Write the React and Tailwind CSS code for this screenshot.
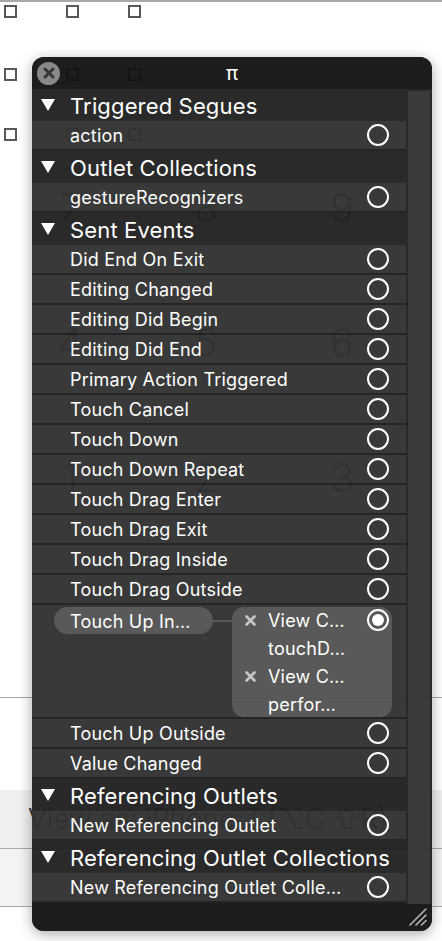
import React from "react";

const Radio = ({ filled }) => (
  <div className="w-[22px] h-[22px] rounded-full border-2 border-white flex items-center justify-center shrink-0">
    {filled && <div className="w-[12px] h-[12px] rounded-full bg-white" />}
  </div>
);

const Row = ({ label }) => (
  <div className="h-[30px] border-b-2 border-[#1c1c1c] bg-[#313131] flex items-center pl-[38px] pr-[17px]">
    <span className="flex-1 pt-[2px] text-[18px] leading-[24px] tracking-[0.2px] text-white whitespace-nowrap">{label}</span>
    <Radio />
  </div>
);

const Header = ({ label }) => (
  <div className="h-[32px] bg-[#212121] flex items-center pl-[9px]">
    <svg width="14" height="12" viewBox="0 0 14 12" className="shrink-0">
      <polygon points="0,0 14,0 7,12" fill="#ffffff" />
    </svg>
    <span className="ml-[15px] pt-[1px] text-[22px] leading-[28px] tracking-[0.15px] text-white whitespace-nowrap">{label}</span>
  </div>
);

const SmallX = () => (
  <svg width="11" height="11" viewBox="0 0 11 11" className="shrink-0">
    <path d="M1.5 1.5 L9.5 9.5 M9.5 1.5 L1.5 9.5" stroke="#c4c4c4" strokeWidth="2.6" strokeLinecap="round" />
  </svg>
);

const Txt = ({ children, className = "" }) => (
  <span className={"pt-[2px] text-[18px] leading-[24px] tracking-[0.2px] text-white whitespace-nowrap " + className}>{children}</span>
);

const ExpandedRow = () => (
  <div className="h-[114px] border-b-2 border-[#1c1c1c] bg-[#313131] flex items-start">
    <div className="ml-[22px] mt-[2px] h-[27px] w-[159px] rounded-full bg-[#525252] flex items-center pl-[16px]">
      <Txt>Touch Up In…</Txt>
    </div>
    <div className="mt-[15px] w-[19px] h-[2px] bg-[#525252]" />
    <div className="mt-[2px] w-[160px] h-[110px] rounded-[12px] bg-[#525252] flex flex-col">
      <div className="h-[27px] flex items-center pl-[13px] pr-[3px]">
        <SmallX />
        <Txt className="ml-[12px] flex-1">View C…</Txt>
        <Radio filled />
      </div>
      <div className="h-[29px] flex items-center pl-[36px]">
        <Txt>touchD…</Txt>
      </div>
      <div className="h-[29px] flex items-center pl-[13px]">
        <SmallX />
        <Txt className="ml-[12px]">View C…</Txt>
      </div>
      <div className="h-[27px] flex items-center pl-[36px]">
        <Txt>perfor…</Txt>
      </div>
    </div>
  </div>
);

const sentEvents = [
  "Did End On Exit",
  "Editing Changed",
  "Editing Did Begin",
  "Editing Did End",
  "Primary Action Triggered",
  "Touch Cancel",
  "Touch Down",
  "Touch Down Repeat",
  "Touch Drag Enter",
  "Touch Drag Exit",
  "Touch Drag Inside",
  "Touch Drag Outside",
];

const Box = () => <div className="w-[13px] h-[13px] border-2 border-[#585858] bg-white" />;

export default function App() {
  return (
    <div className="relative w-[442px] h-[941px] bg-white overflow-hidden" style={{ fontFamily: "Inter, 'Noto Sans', sans-serif" }}>
      {/* canvas behind */}
      <div className="flex flex-col">
        <div className="h-[2px] bg-[#a8a8a8]" />
        <div className="mt-[3px] flex gap-[49px] pl-[4px]"><Box /><Box /><Box /></div>
        <div className="mt-[50px] flex gap-[49px] pl-[4px]"><Box /><Box /><Box /></div>
        <div className="mt-[47px] flex gap-[49px] pl-[4px]"><Box /><Box /><Box /></div>
        <div className="mt-[47px] pl-[50px] grid grid-cols-[40px_40px_40px] gap-x-[96px] gap-y-[95px] text-[40px] leading-[40px] font-light text-[#4a5566] text-center">
          <span>7</span><span>8</span><span>9</span>
          <span>4</span><span>5</span><span>6</span>
          <span>1</span><span>2</span><span>3</span>
        </div>
        <div className="mt-[199px] h-[1px] bg-[#a8a8a8]" />
        <div className="mt-[92px] h-[58px] bg-[#efefef] flex items-center pl-[28px]">
          <span className="text-[28px] font-light text-[#333] whitespace-nowrap">View as: iPhone 7 (⌥C ⇧R)</span>
        </div>
        <div className="h-[1px] bg-[#a8a8a8]" />
        <div className="h-[57px] bg-[#f3f3f3]" />
        <div className="h-[1px] bg-[#a8a8a8]" />
      </div>

      {/* floating connections panel */}
      <div className="absolute left-[32px] top-[57px] w-[400px] h-[874px] rounded-[12px] overflow-hidden opacity-[0.955] shadow-[0_3px_14px_rgba(0,0,0,0.35)] bg-[#131313] flex flex-col">
        <div className="h-[32px] shrink-0 bg-[#131313] grid grid-cols-[1fr_auto_1fr] items-center">
          <div className="pl-[5px] flex items-center">
            <div className="w-[23px] h-[23px] rounded-full bg-[#848484] flex items-center justify-center">
              <svg width="12" height="12" viewBox="0 0 12 12">
                <path d="M2 2 L10 10 M10 2 L2 10" stroke="#2e2e2e" strokeWidth="3" strokeLinecap="round" />
              </svg>
            </div>
          </div>
          <span className="text-[20px] leading-[24px] text-white">π</span>
          <div />
        </div>
        <div className="flex-1 flex min-h-0">
          <div className="w-[374px] flex flex-col">
            <Header label="Triggered Segues" />
            <Row label="action" />
            <Header label="Outlet Collections" />
            <Row label="gestureRecognizers" />
            <Header label="Sent Events" />
            {sentEvents.map((s) => (
              <Row key={s} label={s} />
            ))}
            <ExpandedRow />
            <Row label="Touch Up Outside" />
            <Row label="Value Changed" />
            <Header label="Referencing Outlets" />
            <Row label="New Referencing Outlet" />
            <Header label="Referencing Outlet Collections" />
            <Row label="New Referencing Outlet Colle…" />
          </div>
          <div className="w-[26px] bg-[#212121] pt-[2px] px-[2px] flex">
            <div className="flex-1 bg-[#333333]" />
          </div>
        </div>
        <div className="h-[27px] shrink-0 bg-[#131313] flex justify-end items-end pr-[5px] pb-[5px]">
          <svg width="18" height="18" viewBox="0 0 18 18">
            <path d="M1 17 L17 1 M7 17 L17 7 M12.5 17 L17 12.5" stroke="#b4b4b4" strokeWidth="1.6" strokeLinecap="round" />
          </svg>
        </div>
      </div>
    </div>
  );
}
